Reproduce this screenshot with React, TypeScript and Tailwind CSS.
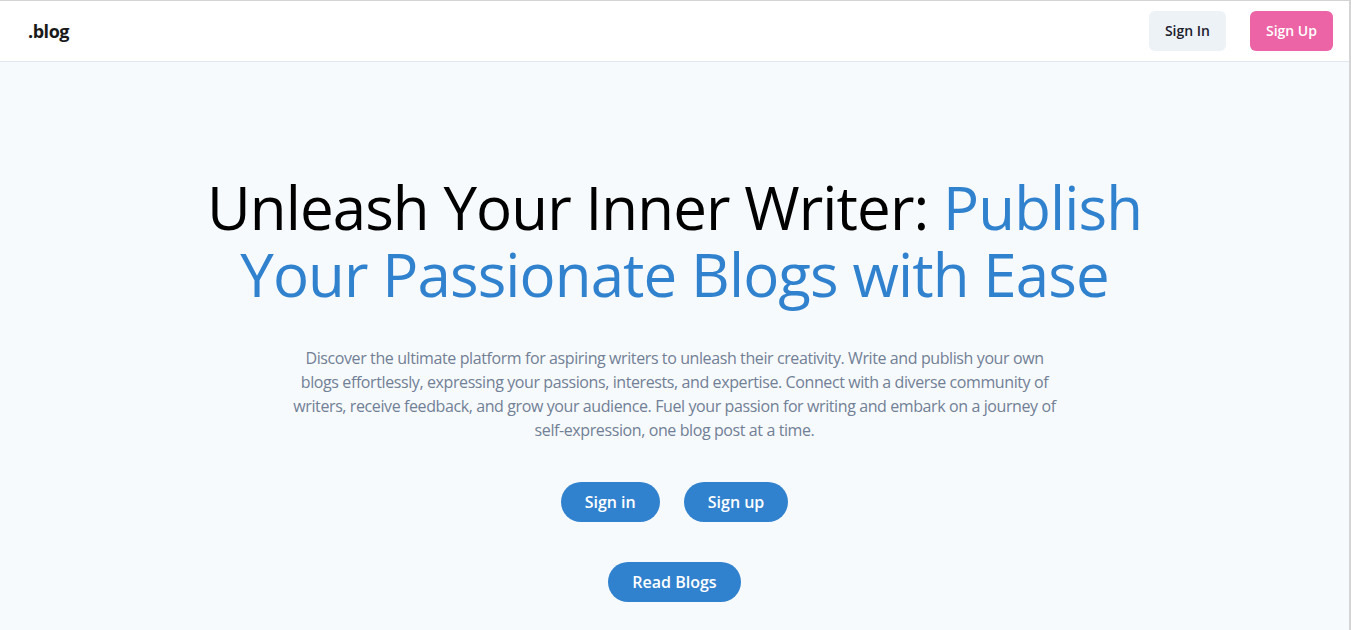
const Navbar = () => {
  return (
    <nav className="flex h-[61px] items-center justify-between border-b border-[#e2e8f0] bg-white pl-7 pr-4">
      <span className="text-lg font-bold tracking-tight text-[#1a1a1a]">.blog</span>
      <div className="flex items-center gap-6">
        <button className="h-10 rounded-md bg-[#edf2f7] px-4 text-sm font-semibold text-[#1a202c]">
          Sign In
        </button>
        <button className="h-10 rounded-md bg-[#ed64a6] px-4 text-sm font-semibold text-white">
          Sign Up
        </button>
      </div>
    </nav>
  );
};

const Hero = () => {
  return (
    <section className="flex flex-col items-center px-4 pt-[112px] pb-10 text-center">
      <h1 className="text-[60px] font-normal leading-[67px] tracking-[-0.015em] text-black">
        Unleash Your Inner Writer:{" "}
        <span className="text-[#3182ce]">
          Publish
          <br />
          Your Passionate Blogs with Ease
        </span>
      </h1>

      <p className="mt-[38px] max-w-[800px] text-base leading-6 tracking-[-0.025em] text-[#718096]">
        Discover the ultimate platform for aspiring writers to unleash their creativity. Write and publish your own
        <br />
        blogs effortlessly, expressing your passions, interests, and expertise. Connect with a diverse community of
        <br />
        writers, receive feedback, and grow your audience. Fuel your passion for writing and embark on a journey of
        <br />
        self-expression, one blog post at a time.
      </p>

      <div className="mt-[40px] flex items-center gap-6">
        <button className="h-10 rounded-full bg-[#3182ce] px-6 text-base font-semibold text-white">
          Sign in
        </button>
        <button className="h-10 rounded-full bg-[#3182ce] px-6 text-base font-semibold text-white">
          Sign up
        </button>
      </div>

      <button className="mt-10 h-10 rounded-full bg-[#3182ce] px-6 text-base font-semibold text-white">
        Read Blogs
      </button>
    </section>
  );
};

export default function App() {
  return (
    <div
      className="min-h-screen border-t border-r-2 border-[#d4d4d4] bg-[#f7fafc]"
      style={{ fontFamily: '"Open Sans", "Noto Sans", sans-serif' }}
    >
      <Navbar />
      <Hero />
    </div>
  );
}
